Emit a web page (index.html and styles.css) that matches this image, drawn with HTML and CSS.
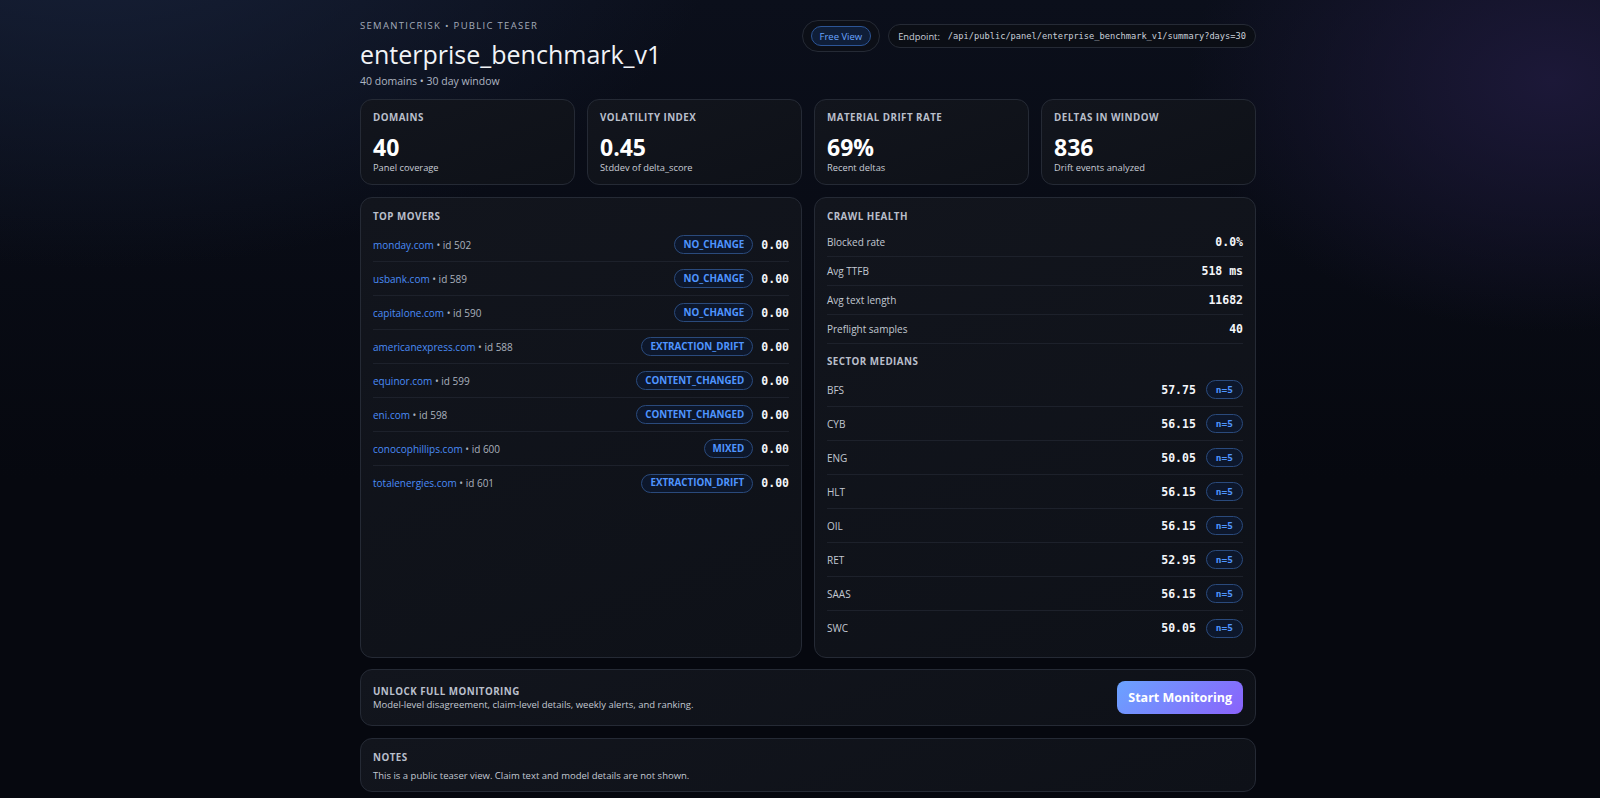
FILE: index.html
```html
<!DOCTYPE html>
<html lang="en">
<head>
    <meta charset="UTF-8">
    <meta name="viewport" content="width=device-width, initial-scale=1.0">
    <title>enterprise_benchmark_v1 · SemanticRisk</title>
    <link rel="stylesheet" href="styles.css">
</head>
<body>
    <div class="page">
        <header class="top">
            <div class="intro">
                <div class="kicker">SemanticRisk • Public teaser</div>
                <h1>enterprise_benchmark_v1</h1>
                <div class="meta">40 domains • 30 day window</div>
            </div>
            <div class="top-actions">
                <div class="plan-pill"><span class="tag">Free View</span></div>
                <div class="endpoint">
                    <span>Endpoint:</span>
                    <code>/api/public/panel/enterprise_benchmark_v1/summary?days=30</code>
                </div>
            </div>
        </header>

        <section class="stats">
            <div class="card stat">
                <div class="label">Domains</div>
                <div class="stat-value">40</div>
                <div class="stat-sub">Panel coverage</div>
            </div>
            <div class="card stat">
                <div class="label">Volatility index</div>
                <div class="stat-value">0.45</div>
                <div class="stat-sub">Stddev of delta_score</div>
            </div>
            <div class="card stat">
                <div class="label">Material drift rate</div>
                <div class="stat-value">69%</div>
                <div class="stat-sub">Recent deltas</div>
            </div>
            <div class="card stat">
                <div class="label">Deltas in window</div>
                <div class="stat-value">836</div>
                <div class="stat-sub">Drift events analyzed</div>
            </div>
        </section>

        <section class="split">
            <div class="card panel">
                <div class="label">Top movers</div>
                <ul class="rows">
                    <li class="row">
                        <span><a href="#">monday.com</a> <span class="muted">• id 502</span></span>
                        <span class="row-end"><span class="badge">NO_CHANGE</span><span class="num">0.00</span></span>
                    </li>
                    <li class="row">
                        <span><a href="#">usbank.com</a> <span class="muted">• id 589</span></span>
                        <span class="row-end"><span class="badge">NO_CHANGE</span><span class="num">0.00</span></span>
                    </li>
                    <li class="row">
                        <span><a href="#">capitalone.com</a> <span class="muted">• id 590</span></span>
                        <span class="row-end"><span class="badge">NO_CHANGE</span><span class="num">0.00</span></span>
                    </li>
                    <li class="row">
                        <span><a href="#">americanexpress.com</a> <span class="muted">• id 588</span></span>
                        <span class="row-end"><span class="badge">EXTRACTION_DRIFT</span><span class="num">0.00</span></span>
                    </li>
                    <li class="row">
                        <span><a href="#">equinor.com</a> <span class="muted">• id 599</span></span>
                        <span class="row-end"><span class="badge">CONTENT_CHANGED</span><span class="num">0.00</span></span>
                    </li>
                    <li class="row">
                        <span><a href="#">eni.com</a> <span class="muted">• id 598</span></span>
                        <span class="row-end"><span class="badge">CONTENT_CHANGED</span><span class="num">0.00</span></span>
                    </li>
                    <li class="row">
                        <span><a href="#">conocophillips.com</a> <span class="muted">• id 600</span></span>
                        <span class="row-end"><span class="badge">MIXED</span><span class="num">0.00</span></span>
                    </li>
                    <li class="row">
                        <span><a href="#">totalenergies.com</a> <span class="muted">• id 601</span></span>
                        <span class="row-end"><span class="badge">EXTRACTION_DRIFT</span><span class="num">0.00</span></span>
                    </li>
                </ul>
            </div>

            <div class="card panel">
                <div class="label">Crawl health</div>
                <ul class="rows compact">
                    <li class="row"><span class="key">Blocked rate</span><span class="num">0.0%</span></li>
                    <li class="row"><span class="key">Avg TTFB</span><span class="num">518 ms</span></li>
                    <li class="row"><span class="key">Avg text length</span><span class="num">11682</span></li>
                    <li class="row"><span class="key">Preflight samples</span><span class="num">40</span></li>
                </ul>

                <div class="label section-label">Sector medians</div>
                <ul class="rows">
                    <li class="row"><span class="key">BFS</span><span class="row-end"><span class="num">57.75</span><span class="badge mono">n=5</span></span></li>
                    <li class="row"><span class="key">CYB</span><span class="row-end"><span class="num">56.15</span><span class="badge mono">n=5</span></span></li>
                    <li class="row"><span class="key">ENG</span><span class="row-end"><span class="num">50.05</span><span class="badge mono">n=5</span></span></li>
                    <li class="row"><span class="key">HLT</span><span class="row-end"><span class="num">56.15</span><span class="badge mono">n=5</span></span></li>
                    <li class="row"><span class="key">OIL</span><span class="row-end"><span class="num">56.15</span><span class="badge mono">n=5</span></span></li>
                    <li class="row"><span class="key">RET</span><span class="row-end"><span class="num">52.95</span><span class="badge mono">n=5</span></span></li>
                    <li class="row"><span class="key">SAAS</span><span class="row-end"><span class="num">56.15</span><span class="badge mono">n=5</span></span></li>
                    <li class="row"><span class="key">SWC</span><span class="row-end"><span class="num">50.05</span><span class="badge mono">n=5</span></span></li>
                </ul>
            </div>
        </section>

        <section class="card cta">
            <div>
                <div class="label">Unlock full monitoring</div>
                <p class="note-text">Model-level disagreement, claim-level details, weekly alerts, and ranking.</p>
            </div>
            <a href="#" class="btn">Start Monitoring</a>
        </section>

        <section class="card notes">
            <div class="label">Notes</div>
            <p class="note-text">This is a public teaser view. Claim text and model details are not shown.</p>
        </section>
    </div>
</body>
</html>
```

FILE: styles.css
```css
:root {
    --bg: #06080f;
    --card: #0f1219;
    --line: #252a35;
    --divider: #1d212b;
    --text: #f1f3f7;
    --muted: #aab1bd;
    --label: #b9bfcb;
    --blue: #4a8cf7;
    --mono: 'DejaVu Sans Mono', 'Liberation Mono', monospace;
}

* {
    margin: 0;
    padding: 0;
    box-sizing: border-box;
}

html {
    background: var(--bg);
}

body {
    min-height: 100vh;
    font-family: 'Open Sans', 'Noto Sans', sans-serif;
    color: var(--text);
    padding: 0 0 0 16px;
    background:
        radial-gradient(900px 520px at 6% -12%, #172139 0%, rgba(23, 33, 57, 0) 70%),
        radial-gradient(520px 360px at 97% 10%, #1c1838 0%, rgba(28, 24, 56, 0) 70%),
        linear-gradient(180deg, #0b0f1b 0%, #06080f 60%);
}

.page {
    width: 896px;
    margin: 0 auto;
    padding: 19px 0 8px;
}

/* header */
.top {
    display: flex;
    justify-content: space-between;
    align-items: flex-start;
}

.kicker {
    font-size: 9.5px;
    line-height: 14px;
    letter-spacing: 1.3px;
    text-transform: uppercase;
    color: #a3abb9;
}

h1 {
    margin-top: 6px;
    font-size: 25px;
    line-height: 30px;
    font-weight: 400;
    color: var(--text);
}

.meta {
    margin-top: 5px;
    font-size: 10.5px;
    line-height: 14px;
    color: #aeb5c2;
}

.top-actions {
    display: flex;
    align-items: center;
    gap: 8px;
    margin-top: 1px;
}

.plan-pill {
    display: flex;
    align-items: center;
    height: 32px;
    padding: 0 8px;
    border: 1px solid var(--line);
    border-radius: 999px;
    background: #0c0f17;
}

.tag {
    display: inline-flex;
    align-items: center;
    height: 20px;
    padding: 0 8px;
    border: 1px solid #2c5596;
    border-radius: 999px;
    background: #0f1e38;
    color: #6aa5ff;
    font-size: 9.5px;
}

.endpoint {
    display: flex;
    align-items: center;
    gap: 8px;
    height: 24px;
    padding: 0 9px;
    border: 1px solid var(--line);
    border-radius: 999px;
    background: #0b0e15;
    font-size: 9.3px;
    color: #c9ced8;
}

.endpoint code {
    font-family: var(--mono);
    font-size: 8.7px;
    color: #c9ced8;
}

/* cards */
.card {
    background: linear-gradient(160deg, #12151d 0%, #0e1118 100%);
    border: 1px solid var(--line);
    border-radius: 12px;
}

.label {
    font-size: 9.8px;
    line-height: 13px;
    font-weight: 700;
    letter-spacing: 0.45px;
    text-transform: uppercase;
    color: var(--label);
}

.stats {
    display: grid;
    grid-template-columns: repeat(4, 1fr);
    gap: 12px;
    margin-top: 11px;
}

.stat {
    height: 86px;
    padding: 11px 12px;
}

.stat-value {
    margin-top: 10px;
    font-size: 23px;
    line-height: 26px;
    font-weight: 700;
    color: #fff;
}

.stat-sub {
    margin-top: 1px;
    font-size: 9.3px;
    line-height: 13px;
    color: #c8ccd5;
}

/* panels */
.split {
    display: grid;
    grid-template-columns: 1fr 1fr;
    gap: 12px;
    margin-top: 12px;
}

.panel {
    padding: 12px;
}

.rows {
    list-style: none;
    margin-top: 5px;
}

.row {
    display: flex;
    justify-content: space-between;
    align-items: center;
    min-height: 34px;
    padding: 7px 0;
    border-bottom: 1px solid var(--divider);
    font-size: 10px;
    line-height: 14px;
}

.rows > .row:last-child {
    border-bottom: none;
}

.rows.compact .row {
    min-height: 28.6px;
}

.rows.compact > .row:last-child {
    border-bottom: 1px solid var(--divider);
}

.section-label {
    margin-top: 11px;
}

.section-label + .rows {
    margin-top: 5px;
}

.row a {
    color: var(--blue);
    text-decoration: none;
}

.muted {
    color: var(--muted);
}

.key {
    color: #c2c8d2;
}

.row-end {
    display: flex;
    align-items: center;
    gap: 8px;
}

.num {
    font-family: var(--mono);
    font-size: 11.5px;
    font-weight: 700;
    color: #f4f6fa;
}

.badge {
    display: inline-flex;
    align-items: center;
    height: 19px;
    padding: 0 8px;
    border: 1px solid #2a4a7c;
    border-radius: 999px;
    background: #0d172b;
    color: #4f95ff;
    font-size: 9.8px;
    font-weight: 700;
}

.badge.mono {
    font-family: var(--mono);
    font-size: 9.5px;
    padding: 0 9px;
    margin-left: 2px;
}

/* bottom blocks */
.cta {
    display: flex;
    justify-content: space-between;
    align-items: center;
    margin-top: 11px;
    padding: 11px 12px;
}

.note-text {
    font-size: 9.5px;
    line-height: 13px;
    color: #c2c8d2;
}

.btn {
    display: inline-flex;
    align-items: center;
    height: 33px;
    padding: 0 11px;
    border-radius: 8px;
    background: linear-gradient(135deg, #6aa3ff 0%, #8a62fb 100%);
    color: #fff;
    font-size: 12.5px;
    font-weight: 700;
    text-decoration: none;
}

.notes {
    margin-top: 12px;
    padding: 12px 12px 9px;
}

.notes .note-text {
    margin-top: 5px;
}
```
